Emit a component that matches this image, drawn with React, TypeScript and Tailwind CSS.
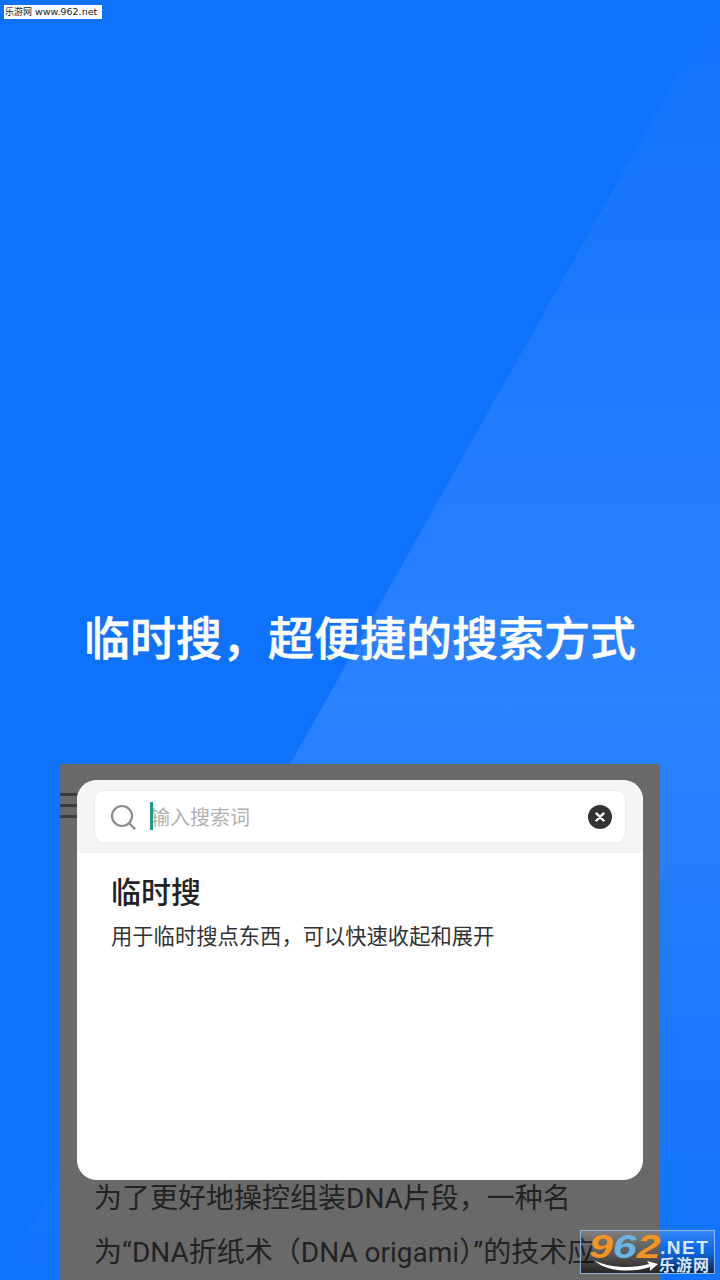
const cjk = '"Noto Sans CJK SC", sans-serif';
const mixed = 'Roboto, "Noto Sans CJK SC", sans-serif';

function Watermark() {
  return (
    <div className="absolute right-[5px] bottom-[6px] w-[135px] h-[44px] border border-[#8fb4dc] bg-gradient-to-b from-[#ffffff26] via-[#0000001a] to-[#000000a6]">
      <svg className="absolute left-[12px] top-[28px]" width="66" height="14" viewBox="0 0 66 14">
        <path d="M1 1 C14 9 40 10 56 5 L54 2 L65 5 L57 12 L57 8 C40 14 12 13 1 1Z" fill="#ffffff" />
      </svg>
      <div className="absolute left-[8px] top-[-3px] flex origin-left scale-x-[1.3] font-['Liberation_Sans',sans-serif] italic font-bold text-[33px] leading-[38px]">
        <span className="text-[#f2941f]">9</span>
        <span className="text-[#6cb4e4]">6</span>
        <span className="text-[#f2941f]">2</span>
      </div>
      <div className="absolute left-[79px] top-[6px] font-['Liberation_Sans',sans-serif] font-bold text-[19px] leading-[21px] tracking-[1.5px] text-[#d8e8f4]">.NET</div>
      <div className="absolute left-[78px] top-[25px] text-[16px] leading-[17px] font-bold tracking-[1px] text-[#d8e8f4]" style={{ fontFamily: cjk }}>乐游网</div>
    </div>
  );
}

export default function App() {
  return (
    <div className="relative w-[720px] h-[1280px] overflow-hidden bg-[#0f72fc]" style={{ fontFamily: cjk }}>
      {/* background band */}
      <div className="absolute inset-0 bg-gradient-to-b from-[#0f72fc] via-[#2a82fe] via-[55%] to-[#0f72fc] [clip-path:polygon(720px_0px,720px_1280px,0px_1280px)]" />

      <div className="absolute left-[4px] top-[5px] w-[98px] h-[14px] bg-white flex items-center pl-[1px] text-[9px] leading-[14px] text-[#222] whitespace-nowrap">
        乐游网<span className="font-['DejaVu_Sans',sans-serif] text-[9.5px] ml-[3px]">www.962.net</span>
      </div>

      <div className="relative flex flex-col h-full">
        <h1 className="mt-[605px] h-[60px] text-center text-[46px] leading-[60px] font-medium [-webkit-text-stroke:0.5px_white] text-white whitespace-nowrap">临时搜，超便捷的搜索方式</h1>

        <div className="relative mt-[99px] mx-[60px] flex-1 bg-[#696969] overflow-hidden">
          <div className="absolute left-0 top-[29px] w-[17px] flex flex-col gap-[8px]">
            <div className="h-[3px] bg-[#3c3c3c]" />
            <div className="h-[3px] bg-[#3c3c3c]" />
            <div className="h-[3px] bg-[#3c3c3c]" />
          </div>

          <div className="mt-[16px] mx-[17px] h-[400px] rounded-[20px] bg-white overflow-hidden">
            <div className="h-[73px] bg-[#f4f4f6] px-[17px] pt-[10px]">
              <div className="h-[53px] rounded-[10px] bg-white border border-[#ececee] flex items-center pl-[15px] pr-[13px]">
                <svg width="26" height="26" viewBox="0 0 26 26" fill="none" stroke="#8c8c8c" strokeWidth="2.2" strokeLinecap="round">
                  <circle cx="12" cy="12" r="10" />
                  <path d="M20 20l4.5 4.5" />
                </svg>
                <div className="relative ml-[14px] flex-1 text-[20px] leading-[28px] text-[#b0b0b0]">
                  <span className="absolute left-0 top-[-1px] w-[3px] h-[28px] bg-[#1f9a88]" />
                  <span>输入搜索词</span>
                </div>
                <div className="w-[24px] h-[24px] rounded-full bg-[#333333] flex items-center justify-center">
                  <svg width="10" height="10" viewBox="0 0 10 10" stroke="#ffffff" strokeWidth="2.4" strokeLinecap="round">
                    <path d="M1.5 1.5l7 7M8.5 1.5l-7 7" />
                  </svg>
                </div>
              </div>
            </div>
            <div className="pl-[34px] pt-[17px]">
              <div className="text-[30px] leading-[40px] font-medium text-[#222222]">临时搜</div>
              <div className="mt-[11px] text-[21.3px] leading-[28px] text-[#333333] whitespace-nowrap">用于临时搜点东西，可以快速收起和展开</div>
            </div>
          </div>

          <div className="pl-[34px] text-[28px] leading-[54px] text-[#222222] whitespace-nowrap" style={{ fontFamily: mixed }}>
            <div className="mt-[-8px]">为了更好地操控组装DNA片段，一种名</div>
            <div>为“DNA折纸术（DNA origami）”的技术应</div>
          </div>
        </div>
      </div>

      <Watermark />
    </div>
  );
}
